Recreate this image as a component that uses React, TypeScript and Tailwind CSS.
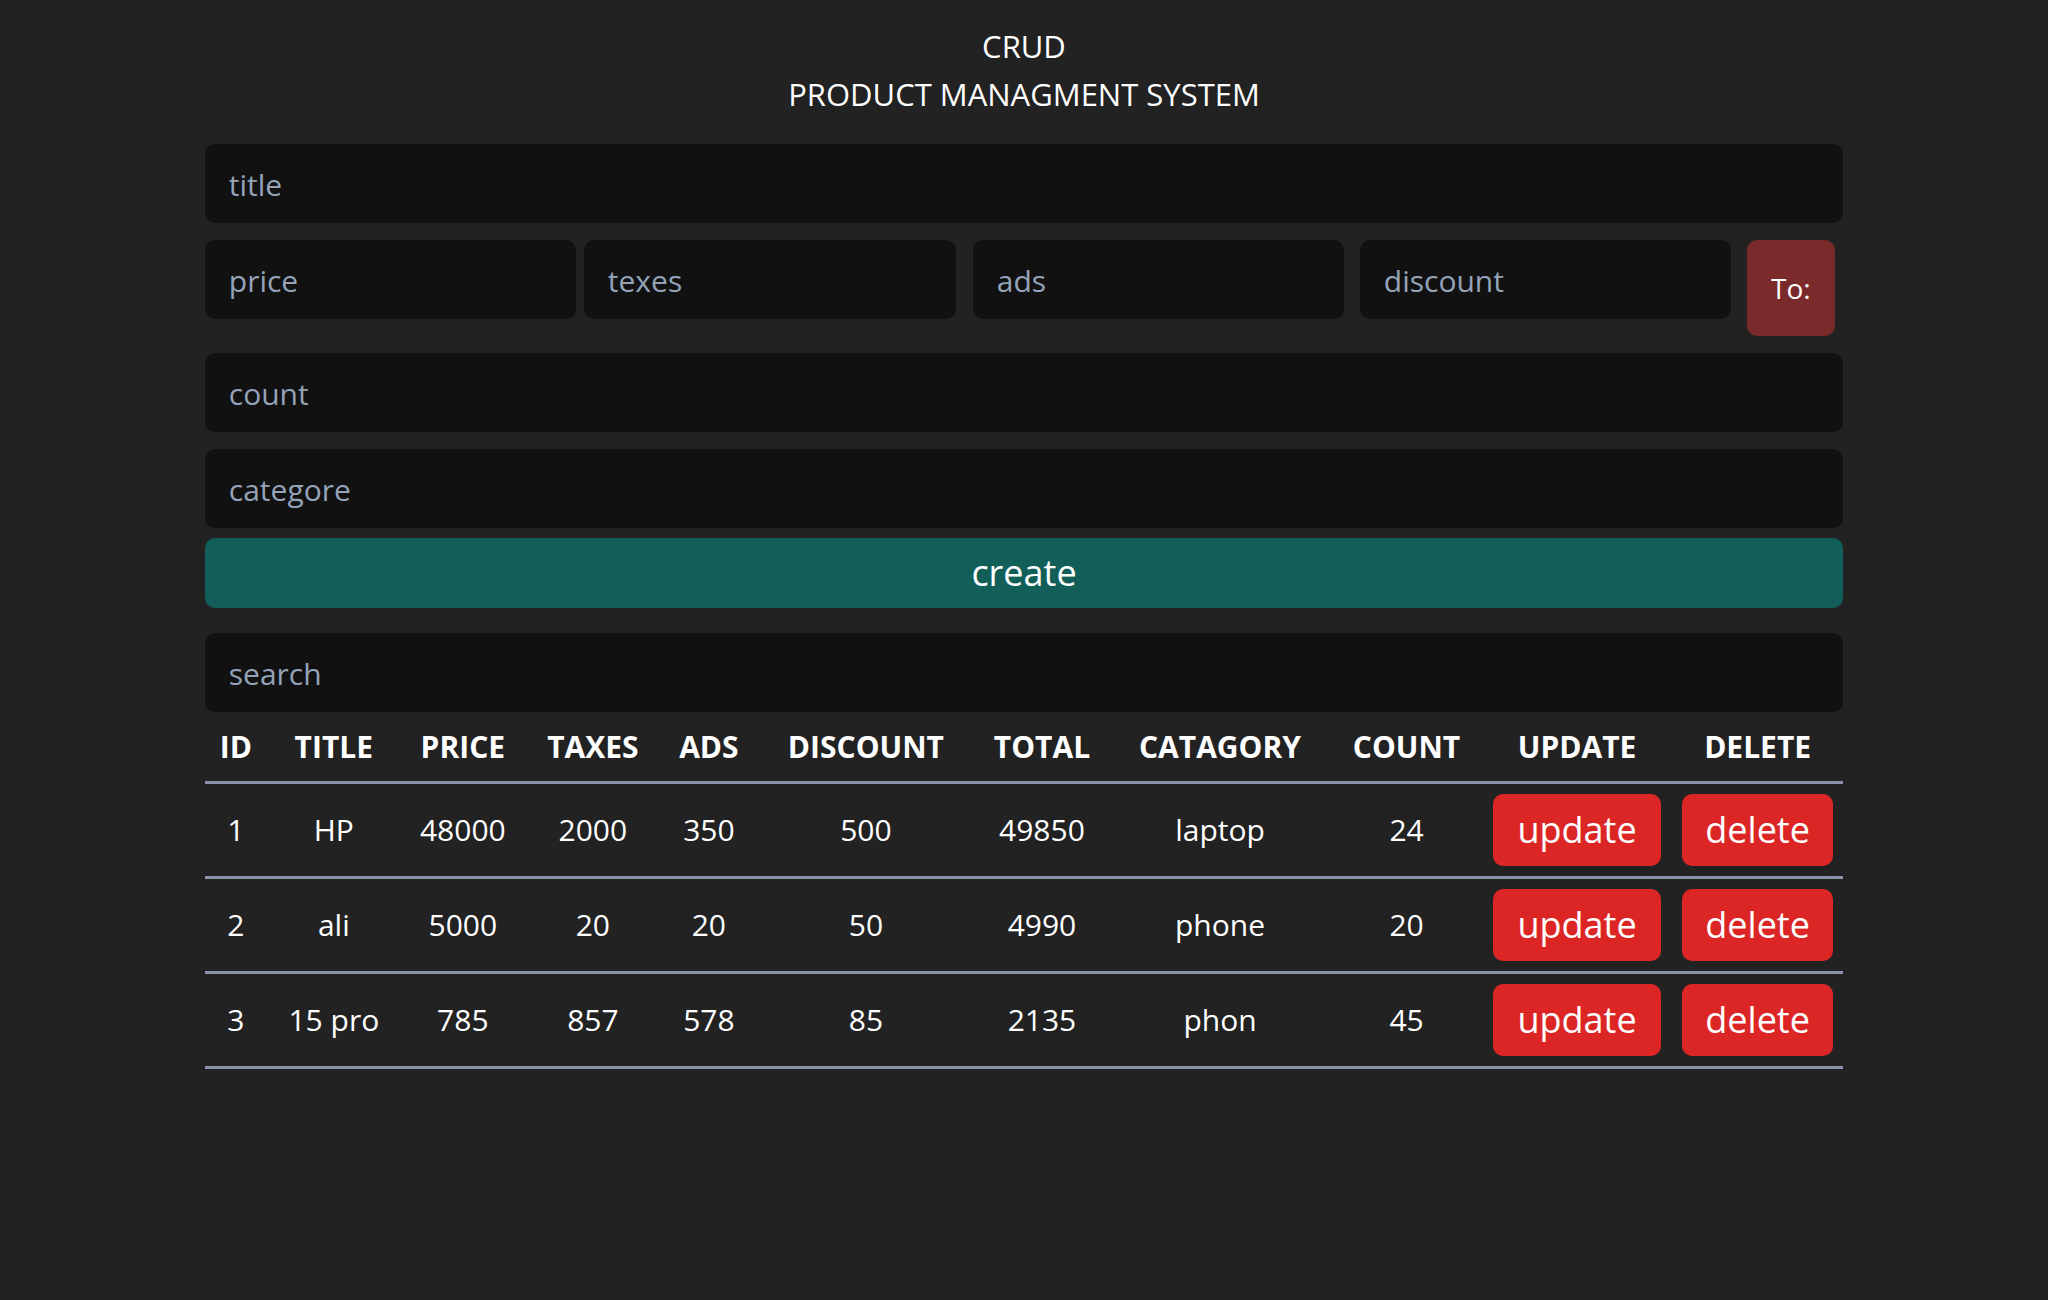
import React from "react";

type Product = {
  id: number;
  title: string;
  price: number;
  taxes: number;
  ads: number;
  discount: number;
  total: number;
  category: string;
  count: number;
};

const products: Product[] = [
  { id: 1, title: "HP", price: 48000, taxes: 2000, ads: 350, discount: 500, total: 49850, category: "laptop", count: 24 },
  { id: 2, title: "ali", price: 5000, taxes: 20, ads: 20, discount: 50, total: 4990, category: "phone", count: 20 },
  { id: 3, title: "15 pro", price: 785, taxes: 857, ads: 578, discount: 85, total: 2135, category: "phon", count: 45 },
];

const headers = ["ID", "TITLE", "PRICE", "TAXES", "ADS", "DISCOUNT", "TOTAL", "CATAGORY", "COUNT", "UPDATE", "DELETE"];

const inputCls =
  "h-[79px] rounded-[10px] bg-[#111111] px-[24px] pt-[2px] text-[30px] text-white placeholder:text-[#94a3b8] outline-none";

function Field({ placeholder, className = "w-full" }: { placeholder: string; className?: string }) {
  return <input type="text" placeholder={placeholder} className={`${inputCls} ${className}`} />;
}

export default function App() {
  return (
    <div className="min-h-screen bg-[#222222] text-white" style={{ fontFamily: '"Open Sans", "Noto Sans", sans-serif' }}>
      <div className="mx-auto w-[80%]">
        <header className="pt-[22px] text-center text-[31px] leading-[48px]">
          <h2>CRUD</h2>
          <p>PRODUCT MANAGMENT SYSTEM</p>
        </header>

        <div className="mt-[26px]">
          <Field placeholder="title" />

          <div className="mt-[17px] flex items-start">
            <Field placeholder="price" className="w-[371px]" />
            <Field placeholder="texes" className="ml-[8px] w-[372px]" />
            <Field placeholder="ads" className="ml-[17px] w-[371px]" />
            <Field placeholder="discount" className="ml-[16px] w-[371px]" />
            <small className="ml-[16px] flex h-[96px] w-[88px] items-center justify-center rounded-[10px] bg-[#7b2a2c] text-[28px]">
              To:
            </small>
          </div>

          <Field placeholder="count" className="mt-[17px] w-full" />
          <Field placeholder="categore" className="mt-[17px] w-full" />

          <button className="mt-[10px] h-[70px] w-full rounded-[10px] bg-[#125e59] text-[36px] text-white">create</button>

          <Field placeholder="search" className="mt-[25px] w-full" />
        </div>

        <table className="w-full table-fixed border-collapse text-center">
          <colgroup>
            <col className="w-[62px]" />
            <col className="w-[134px]" />
            <col className="w-[124px]" />
            <col className="w-[136px]" />
            <col className="w-[96px]" />
            <col className="w-[218px]" />
            <col className="w-[134px]" />
            <col className="w-[222px]" />
            <col className="w-[151px]" />
            <col className="w-[190px]" />
            <col className="w-[171px]" />
          </colgroup>
          <thead>
            <tr>
              {headers.map((h) => (
                <th key={h} className="h-[70px] border-b-[3px] border-[#8b95a9] text-[30px] font-bold">
                  {h}
                </th>
              ))}
            </tr>
          </thead>
          <tbody>
            {products.map((p) => (
              <tr key={p.id} className="text-[30px]">
                <td className="h-[95px] border-b-[3px] border-[#8b95a9]">{p.id}</td>
                <td className="border-b-[3px] border-[#8b95a9]">{p.title}</td>
                <td className="border-b-[3px] border-[#8b95a9]">{p.price}</td>
                <td className="border-b-[3px] border-[#8b95a9]">{p.taxes}</td>
                <td className="border-b-[3px] border-[#8b95a9]">{p.ads}</td>
                <td className="border-b-[3px] border-[#8b95a9]">{p.discount}</td>
                <td className="border-b-[3px] border-[#8b95a9]">{p.total}</td>
                <td className="border-b-[3px] border-[#8b95a9]">{p.category}</td>
                <td className="border-b-[3px] border-[#8b95a9]">{p.count}</td>
                <td className="border-b-[3px] border-[#8b95a9]">
                  <button className="h-[72px] w-[168px] rounded-[10px] bg-[#dc2626] text-[36px] text-white">update</button>
                </td>
                <td className="border-b-[3px] border-[#8b95a9]">
                  <button className="h-[72px] w-[151px] rounded-[10px] bg-[#dc2626] text-[36px] text-white">delete</button>
                </td>
              </tr>
            ))}
          </tbody>
        </table>
      </div>
    </div>
  );
}
